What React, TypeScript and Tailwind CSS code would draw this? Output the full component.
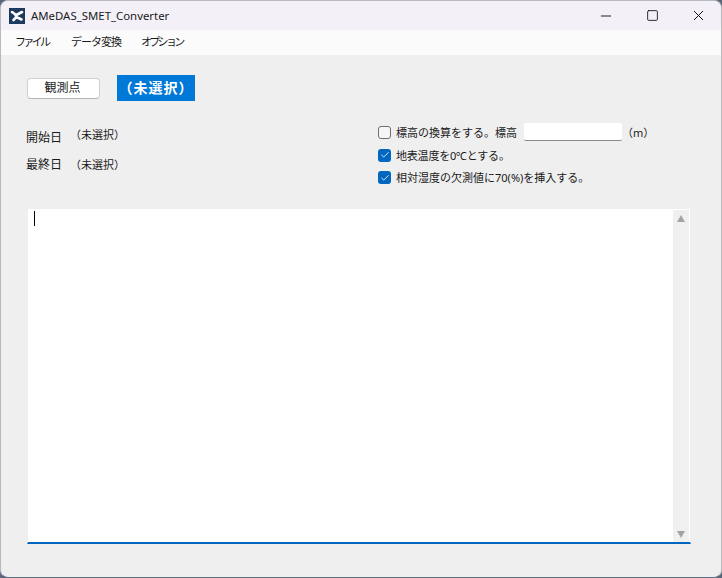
import React from "react";
import { Check, Minus, Square, X } from "lucide-react";

const font = "font-['Noto_Sans','Noto_Sans_CJK_JP',sans-serif]";

const CheckBox = ({ checked = false }: { checked?: boolean }) =>
  checked ? (
    <div className="w-[13px] h-[13px] rounded-[3px] bg-[#0067c0] flex items-center justify-center shrink-0">
      <Check className="w-[10px] h-[10px] text-white" strokeWidth={2} />
    </div>
  ) : (
    <div className="w-[13px] h-[13px] rounded-[3px] border border-[#6f6f6f] bg-[#f6f6f6] shrink-0"></div>
  );

const CheckRow = ({ checked, label, spacing = "" }: { checked?: boolean; label: string; spacing?: string }) => (
  <div className="flex items-center gap-[5px] h-[24px]">
    <CheckBox checked={checked} />
    <span className={`text-[11px] text-[#1a1a1a] leading-none ${spacing}`}>{label}</span>
  </div>
);

export default function App() {
  return (
    <div className={`w-[722px] h-[578px] overflow-hidden bg-[#56677a] ${font}`}>
      <div className="w-full h-full flex flex-col rounded-t-[8px] rounded-b-[8px] overflow-hidden bg-[#efefef] border border-[#b9b9bd] border-b-[#5f7082]">
        {/* Title bar */}
        <div className="h-[29px] shrink-0 bg-[#f3f0f7] flex items-center pl-[8px]">
          <div className="w-[16px] h-[16px] bg-[#1c3a5e] flex items-center justify-center shrink-0">
            <svg viewBox="0 0 16 16" className="w-[16px] h-[16px]">
              <path d="M3 4 L6.5 6.5 L7.5 9 M13 4 L6.5 7.5 M4.5 12 L7.5 9 L12.5 11.5" stroke="#fff" strokeWidth="2.6" fill="none" strokeLinecap="round" />
            </svg>
          </div>
          <span className="ml-[6px] text-[11.4px] text-[#1a1a1a] leading-none">AMeDAS_SMET_Converter</span>
          <div className="ml-auto flex items-center">
            <div className="w-[46px] flex justify-center"><Minus className="w-[16px] h-[16px] text-[#111]" strokeWidth={1.4} /></div>
            <div className="w-[46px] flex justify-center"><Square className="w-[13px] h-[13px] text-[#111]" strokeWidth={1.6} /></div>
            <div className="w-[46px] flex justify-center"><X className="w-[17px] h-[17px] text-[#111]" strokeWidth={1.4} /></div>
          </div>
        </div>

        {/* Menu */}
        <div className="h-[25px] shrink-0 bg-[#fbfbfb] flex items-center pl-[14px] text-[11px] text-[#1a1a1a]">
          <span className="tracking-[-2.7px] w-[56px]">ファイル</span>
          <span className="tracking-[-1px] w-[70px]">データ変換</span>
          <span className="tracking-[-2.7px]">オプション</span>
        </div>

        {/* Body */}
        <div className="flex-1 flex flex-col pl-[26px] pr-[30px] pt-[20px] pb-[33px] min-h-0">
          <div className="flex items-center gap-[17px] h-[26px] shrink-0">
            <button className="w-[73px] h-[21px] pr-[2px] bg-white rounded-[4px] border border-[#d0d0d0] border-b-[#b5b5b5] text-[12px] text-[#1a1a1a] leading-none">
              観測点
            </button>
            <div className="w-[78px] h-[26px] bg-[#0078d7] text-white font-bold text-[14px] tracking-[1px] flex items-center justify-center leading-none">
              （未選択）
            </div>
          </div>

          <div className="flex mt-[20px] h-[68px] shrink-0">
            <div className="w-[351px] text-[12px] text-[#1a1a1a] leading-none flex flex-col gap-[11px] pt-[11px]">
              <div className="flex items-start h-[16px]">
                <span className="w-[44px] -ml-px">開始日</span>
                <span className="text-[11px] -mt-[3px]">（未選択）</span>
              </div>
              <div className="flex items-start h-[16px]">
                <span className="w-[44px] -ml-px">最終日</span>
                <span className="text-[11px]">（未選択）</span>
              </div>
            </div>
            <div className="flex flex-col -mt-px">
              <div className="flex items-center h-[24px]">
                <CheckRow label="標高の換算をする。標高" />
                <div className="ml-[7px] -mt-[1px] w-[98px] h-[18px] bg-white border-b border-[#8a8a8a] rounded-[2px]"></div>
                <span className="text-[11px] text-[#1a1a1a] leading-none">（m）</span>
              </div>
              <CheckRow checked label="地表温度を0℃とする。" spacing="tracking-[-0.2px]" />
              <CheckRow checked label="相対湿度の欠測値に70(%)を挿入する。" />
            </div>
          </div>

          {/* Log area */}
          <div className="mt-[20px] flex-1 flex min-h-0 bg-white border-b-2 border-b-[#0067c0] border-l border-l-[#efefef] border-r border-r-[#efefef]">
            <div className="flex-1 pl-[6px] pt-[2px]">
              <div className="w-px h-[15px] bg-black"></div>
            </div>
            <div className="w-[16px] mt-px bg-[#f0f0f0] flex flex-col items-center justify-between pt-[5px] pb-[4px]">
              <div className="w-0 h-0 border-x-[4px] border-x-transparent border-b-[7px] border-b-[#a3a3a3]"></div>
              <div className="w-0 h-0 border-x-[4px] border-x-transparent border-t-[7px] border-t-[#a3a3a3]"></div>
            </div>
            <div className="w-px bg-white"></div>
          </div>
        </div>
      </div>
    </div>
  );
}
